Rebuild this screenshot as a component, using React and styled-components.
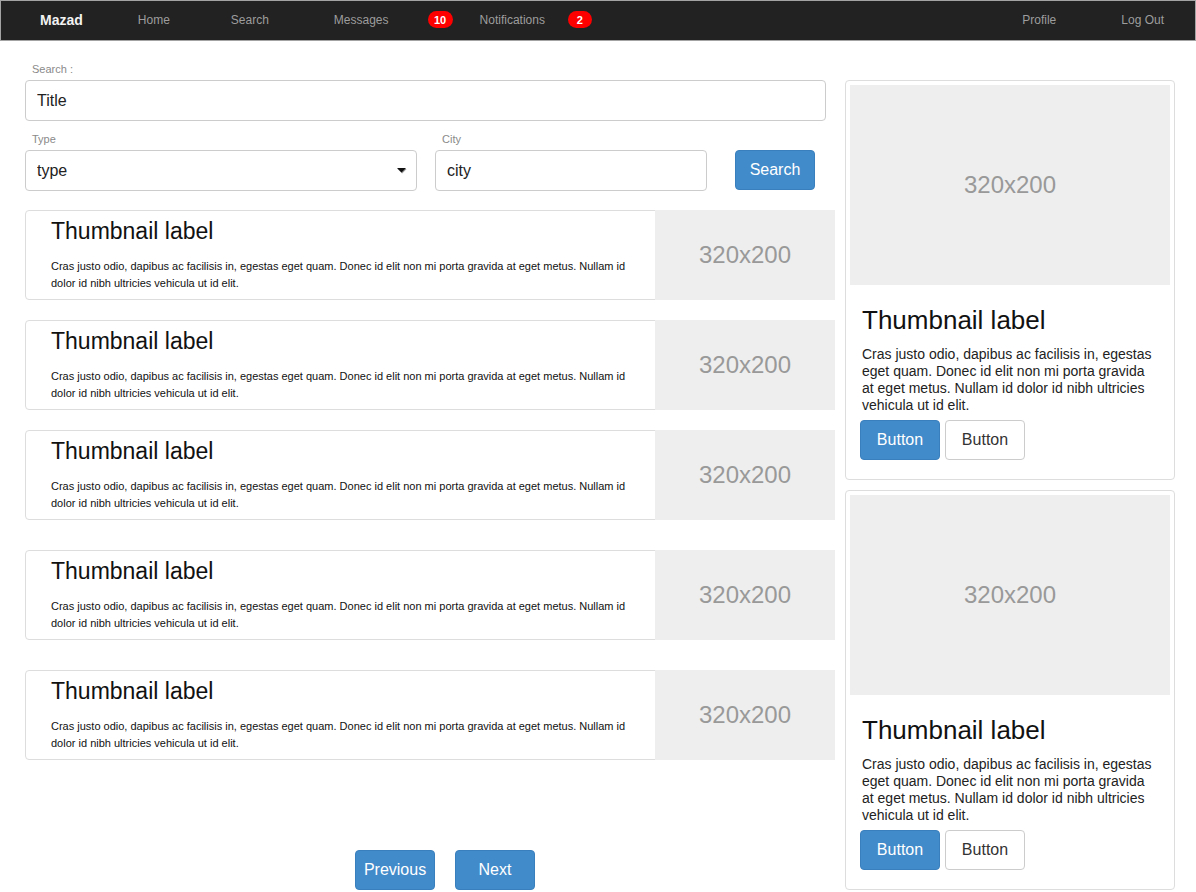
import React from 'react'
import styled, { createGlobalStyle } from 'styled-components'

const GlobalStyle = createGlobalStyle`
  * { box-sizing: border-box; }
  body {
    margin: 0;
    background: #fff;
    font-family: "Liberation Sans", Arial, sans-serif;
    color: #333;
  }
`

const Page = styled.div`
  width: 1196px;
  height: 892px;
  overflow: hidden;
`

const NavBar = styled.nav`
  display: flex;
  align-items: center;
  height: 41px;
  padding: 0 31px 2px 39px;
  background: #222;
  border: 1px solid #a3a3a3;
`

const Brand = styled.span`
  font-size: 14px;
  font-weight: bold;
  color: #f2f2f2;
`

const NavLink = styled.a`
  margin-left: ${p => p.$gap}px;
  font-size: 12px;
  color: #9d9d9d;
  text-decoration: none;
`

const Badge = styled.span`
  display: inline-flex;
  align-items: center;
  justify-content: center;
  margin-left: ${p => p.$gap}px;
  min-width: ${p => p.$w}px;
  height: 17px;
  padding: 0 6px;
  border-radius: 9px;
  background: #f00;
  color: #fff;
  font-size: 11px;
  font-weight: bold;
`

const Spacer = styled.div`
  flex: 1;
`

const Main = styled.div`
  display: flex;
  gap: 10px;
  padding: 20px 0 0 25px;
`

const LeftCol = styled.div`
  width: 810px;
  display: flex;
  flex-direction: column;
`

const RightCol = styled.div`
  width: 330px;
  padding-top: 19px;
  display: flex;
  flex-direction: column;
  gap: 10px;
`

const Label = styled.label`
  display: block;
  padding-left: 7px;
  font-size: 11px;
  line-height: 16px;
  color: #8a8a8a;
`

const Field = styled.div`
  width: ${p => p.$w}px;
  margin-left: ${p => p.$ml || 0}px;
`

const TextInput = styled.input`
  display: block;
  width: 100%;
  height: 41px;
  margin-top: 3px;
  padding: 0 11px;
  border: 1px solid #ccc;
  border-radius: 4px;
  font-family: "Liberation Sans", Arial, sans-serif;
  font-size: 16px;
  color: #222;
  outline: none;
`

const SelectWrap = styled.div`
  position: relative;
  margin-top: 3px;
`

const Select = styled.select`
  display: block;
  width: 100%;
  height: 41px;
  padding: 0 11px;
  border: 1px solid #ccc;
  border-radius: 4px;
  background: #fff;
  appearance: none;
  font-family: "Liberation Sans", Arial, sans-serif;
  font-size: 16px;
  color: #222;
  outline: none;
`

const Caret = styled.svg`
  position: absolute;
  right: 10px;
  top: 17px;
  pointer-events: none;
`

const FilterRow = styled.div`
  display: flex;
  align-items: flex-end;
  margin-top: 10px;
`

const BlueButton = styled.button`
  width: 80px;
  height: 40px;
  margin-left: ${p => p.$ml || 0}px;
  margin-bottom: ${p => p.$mb || 0}px;
  border: 1px solid #3a7fbd;
  border-radius: 4px;
  background: #428bca;
  color: #fff;
  font-family: "Liberation Sans", Arial, sans-serif;
  font-size: 16px;
  cursor: pointer;
`

const PlainButton = styled.button`
  width: 80px;
  height: 40px;
  border: 1px solid #ccc;
  border-radius: 4px;
  background: #fff;
  color: #333;
  font-family: "Liberation Sans", Arial, sans-serif;
  font-size: 16px;
  cursor: pointer;
`

const ListCard = styled.div`
  display: flex;
  width: 798px;
  height: 90px;
  margin-top: ${p => p.$mt}px;
  border: 1px solid #ddd;
  border-radius: 4px;
  background: #fff;
`

const ListBody = styled.div`
  width: 629px;
  padding: 7px 15px 0 25px;
`

const ListTitle = styled.h3`
  margin: 0;
  font-size: 23px;
  font-weight: normal;
  line-height: 26px;
  color: #111;
`

const ListText = styled.p`
  margin: 14px 0 0;
  font-size: 11px;
  line-height: 17px;
  color: #111;
`

const Placeholder = styled.div`
  display: flex;
  align-items: center;
  justify-content: center;
  flex-shrink: 0;
  width: ${p => p.$w}px;
  height: ${p => p.$h}px;
  margin: ${p => p.$m || 0};
  background: #eee;
  color: #999;
  font-size: 24px;
`

const Pager = styled.div`
  display: flex;
  justify-content: center;
  gap: 20px;
  margin-top: 90px;
  padding-left: 30px;
`

const SideCard = styled.div`
  height: 400px;
  padding: 4px;
  border: 1px solid #ddd;
  border-radius: 4px;
  background: #fff;
`

const Caption = styled.div`
  padding: 0 13px 0 10px;
`

const SideTitle = styled.h3`
  margin: 20px 0 0 2px;
  font-size: 26px;
  font-weight: normal;
  line-height: 30px;
  color: #111;
`

const SideText = styled.p`
  margin: 11px 0 0 2px;
  font-size: 14px;
  line-height: 17px;
  color: #222;
`

const ButtonRow = styled.div`
  display: flex;
  gap: 5px;
  margin-top: 6px;
`

const lorem = 'Cras justo odio, dapibus ac facilisis in, egestas eget quam. Donec id elit non mi porta gravida at eget metus. Nullam id dolor id nibh ultricies vehicula ut id elit.'

const listGaps = [19, 20, 20, 30, 30]

const App = () => {
  return (
    <>
      <GlobalStyle />
      <Page>
        <NavBar>
          <Brand>Mazad</Brand>
          <NavLink $gap={55}>Home</NavLink>
          <NavLink $gap={61}>Search</NavLink>
          <NavLink $gap={65}>Messages</NavLink>
          <Badge $gap={39} $w={25}>10</Badge>
          <NavLink $gap={27}>Notifications</NavLink>
          <Badge $gap={23} $w={24}>2</Badge>
          <Spacer />
          <NavLink $gap={0}>Profile</NavLink>
          <NavLink $gap={65}>Log Out</NavLink>
        </NavBar>

        <Main>
          <LeftCol>
            <Field $w={801}>
              <Label>Search :</Label>
              <TextInput defaultValue="Title" />
            </Field>

            <FilterRow>
              <Field $w={392}>
                <Label>Type</Label>
                <SelectWrap>
                  <Select defaultValue="type">
                    <option value="type">type</option>
                  </Select>
                  <Caret width="11" height="7" viewBox="0 0 11 7">
                    <path d="M1 1.5 L10 1.5 L5.5 6 Z" fill="#999" transform="translate(0.6 0.6)" />
                    <path d="M1 1 L10 1 L5.5 5.5 Z" fill="#111" />
                  </Caret>
                </SelectWrap>
              </Field>
              <Field $w={272} $ml={18}>
                <Label>City</Label>
                <TextInput defaultValue="city" />
              </Field>
              <BlueButton $ml={28} $mb={1}>Search</BlueButton>
            </FilterRow>

            {listGaps.map((gap, i) => (
              <ListCard key={i} $mt={gap}>
                <ListBody>
                  <ListTitle>Thumbnail label</ListTitle>
                  <ListText>{lorem}</ListText>
                </ListBody>
                <Placeholder $w={180} $h={90} $m="-1px -14px -1px 0">320x200</Placeholder>
              </ListCard>
            ))}

            <Pager>
              <BlueButton>Previous</BlueButton>
              <BlueButton>Next</BlueButton>
            </Pager>
          </LeftCol>

          <RightCol>
            {[0, 1].map(i => (
              <SideCard key={i}>
                <Placeholder $w={320} $h={200}>320x200</Placeholder>
                <Caption>
                  <SideTitle>Thumbnail label</SideTitle>
                  <SideText>{lorem}</SideText>
                  <ButtonRow>
                    <BlueButton>Button</BlueButton>
                    <PlainButton>Button</PlainButton>
                  </ButtonRow>
                </Caption>
              </SideCard>
            ))}
          </RightCol>
        </Main>
      </Page>
    </>
  )
}

export default App
